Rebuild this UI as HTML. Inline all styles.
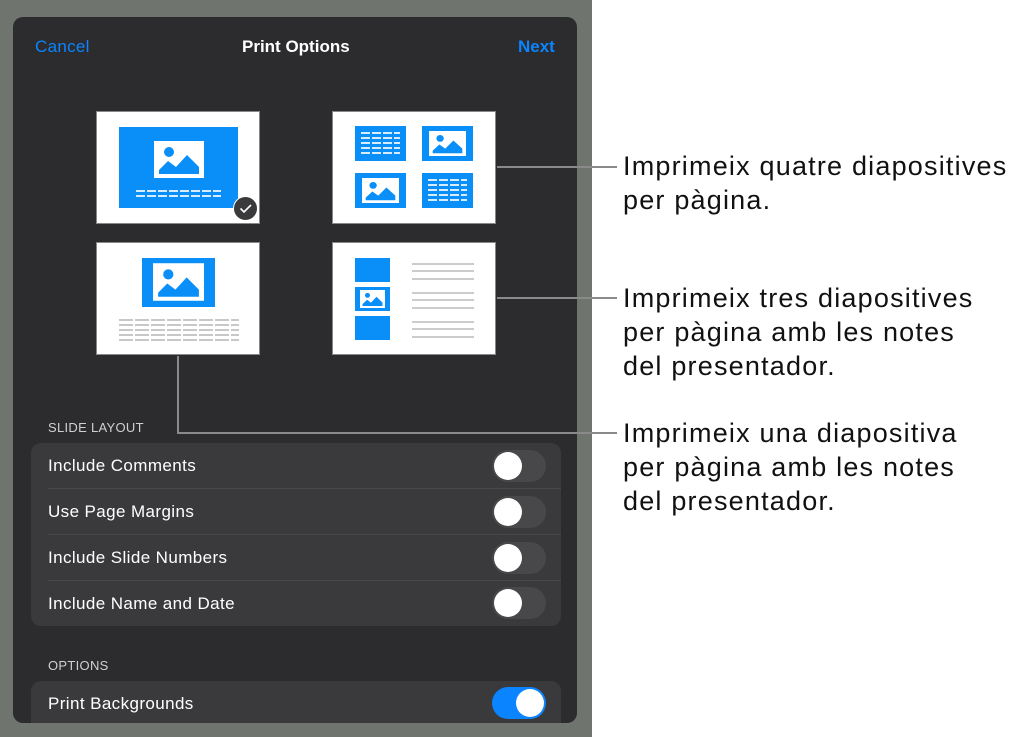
<!DOCTYPE html>
<html><head><meta charset="utf-8"><style>
*{margin:0;padding:0;box-sizing:border-box}
body{width:1017px;height:737px;background:#fff;position:relative;overflow:hidden;font-family:"Liberation Sans",sans-serif}
.a{position:absolute}
.gray{left:0;top:0;width:592px;height:737px;background:#6f746e}
.panel{left:13px;top:17px;width:564px;height:706px;background:#2c2c2e;border-radius:10px;overflow:hidden}
.card{position:absolute;background:#fff;width:164px;height:113px;border:1px solid #888}
.blue{position:absolute;background:#0a8ff8}
.wl{position:absolute;height:2px;background:repeating-linear-gradient(90deg,#d8ecff 0 9px,transparent 9px 11px)}
.gl{position:absolute;height:2px;background:#ccc}
.ln{position:absolute;background:#8a8a8a}
.grp{position:absolute;left:31px;width:530px;background:#3a3a3c;border-radius:10px}
.row{position:absolute;left:17px;color:#fff;font-size:17px;letter-spacing:0.4px}
.sep{position:absolute;left:17px;right:0;height:1px;background:#48484a}
.tg{position:absolute;right:15px;width:54px;height:32px;border-radius:16px;background:#48484a}
.tg::after{content:"";position:absolute;left:2px;top:2px;width:28px;height:28px;border-radius:50%;background:#fff}
.tg.on{background:#0a84ff}.tg.on::after{left:24px}
.hd{position:absolute;left:48px;color:#d0d0d0;font-size:13px;letter-spacing:0.3px}
.t{position:absolute;left:623px;font-size:27px;letter-spacing:1.2px;line-height:34px;color:#111}
</style></head><body>
<div class="a gray"></div>
<div class="a panel"></div>
<div class="a" style="left:35px;top:37px;color:#0a84ff;font-size:17px;letter-spacing:0.3px">Cancel</div>
<div class="a" style="left:242px;top:37px;color:#fff;font-size:17px;font-weight:bold">Print Options</div>
<div class="a" style="left:518px;top:37px;color:#0a84ff;font-size:17px;font-weight:bold">Next</div>

<svg width="0" height="0" style="position:absolute"><defs>
<symbol id="img" viewBox="0 0 50 37"><rect width="50" height="37" fill="#fff"/><circle cx="15" cy="11" r="5" fill="#0a8ff8"/><polygon points="5,33 5,29 14,20 22,26 33,14 45,26 45,33" fill="#0a8ff8"/></symbol>
</defs></svg>

<div class="card" style="left:96px;top:111px">
 <div class="blue" style="left:22px;top:15px;width:119px;height:81px"></div>
 <svg class="a" style="left:57px;top:29px" width="50" height="37"><use href="#img"/></svg>
 <div class="wl" style="left:39px;top:78px;width:85px"></div>
 <div class="wl" style="left:39px;top:83px;width:85px"></div>
</div>
<div class="a" style="left:233px;top:196px;width:25px;height:25px;border-radius:50%;background:#3a3a3c;border:1.5px solid #fff"></div>
<svg class="a" style="left:233px;top:196px" width="25" height="25"><path d="M7.5 12.5l3.5 3.5 7-7" stroke="#fff" stroke-width="1.6" fill="none"/></svg>

<div class="card" style="left:332px;top:111px">
 <div class="blue" style="left:22px;top:14px;width:51px;height:35px"></div>
 <div class="wl" style="left:28px;top:20px;width:39px"></div><div class="wl" style="left:28px;top:25px;width:39px"></div><div class="wl" style="left:28px;top:30px;width:39px"></div><div class="wl" style="left:28px;top:35px;width:39px"></div><div class="wl" style="left:28px;top:40px;width:39px"></div>
 <div class="blue" style="left:89px;top:14px;width:51px;height:35px"></div>
 <svg class="a" style="left:96px;top:19px" width="37" height="25" viewBox="0 0 50 37" preserveAspectRatio="none"><use href="#img"/></svg>
 <div class="blue" style="left:22px;top:61px;width:51px;height:35px"></div>
 <svg class="a" style="left:29px;top:66px" width="37" height="25" viewBox="0 0 50 37" preserveAspectRatio="none"><use href="#img"/></svg>
 <div class="blue" style="left:89px;top:61px;width:51px;height:35px"></div>
 <div class="wl" style="left:95px;top:67px;width:39px"></div><div class="wl" style="left:95px;top:72px;width:39px"></div><div class="wl" style="left:95px;top:77px;width:39px"></div><div class="wl" style="left:95px;top:82px;width:39px"></div><div class="wl" style="left:95px;top:87px;width:39px"></div>
</div>

<div class="card" style="left:96px;top:242px">
 <div class="blue" style="left:45px;top:15px;width:73px;height:49px"></div>
 <svg class="a" style="left:56px;top:20px" width="51" height="38" viewBox="0 0 50 37"><use href="#img"/></svg>
 <div class="gl" style="left:22px;top:76px;width:120px;background:repeating-linear-gradient(90deg,#c8c8c8 0 14px,transparent 14px 16px)"></div>
 <div class="gl" style="left:22px;top:81px;width:120px;background:repeating-linear-gradient(90deg,#c8c8c8 0 14px,transparent 14px 16px)"></div>
 <div class="gl" style="left:22px;top:86px;width:120px;background:repeating-linear-gradient(90deg,#c8c8c8 0 14px,transparent 14px 16px)"></div>
 <div class="gl" style="left:22px;top:91px;width:120px;background:repeating-linear-gradient(90deg,#c8c8c8 0 14px,transparent 14px 16px)"></div>
 <div class="gl" style="left:22px;top:96px;width:120px;background:repeating-linear-gradient(90deg,#c8c8c8 0 14px,transparent 14px 16px)"></div>
</div>

<div class="card" style="left:332px;top:242px">
 <div class="blue" style="left:22px;top:15px;width:35px;height:24px"></div>
 <div class="blue" style="left:22px;top:44px;width:35px;height:24px"></div>
 <svg class="a" style="left:27px;top:47px" width="25" height="18" viewBox="0 0 50 37" preserveAspectRatio="none"><use href="#img"/></svg>
 <div class="blue" style="left:22px;top:73px;width:35px;height:24px"></div>
 <div class="gl" style="left:79px;top:20px;width:62px"></div><div class="gl" style="left:79px;top:27px;width:62px"></div><div class="gl" style="left:79px;top:35px;width:62px"></div>
 <div class="gl" style="left:79px;top:49px;width:62px"></div><div class="gl" style="left:79px;top:56px;width:62px"></div><div class="gl" style="left:79px;top:64px;width:62px"></div>
 <div class="gl" style="left:79px;top:78px;width:62px"></div><div class="gl" style="left:79px;top:85px;width:62px"></div><div class="gl" style="left:79px;top:93px;width:62px"></div>
</div>

<div class="ln" style="left:497px;top:166px;width:120px;height:2px"></div>
<div class="ln" style="left:497px;top:297px;width:120px;height:2px"></div>
<div class="ln" style="left:177px;top:356px;width:2px;height:78px"></div>
<div class="ln" style="left:177px;top:432px;width:440px;height:2px"></div>

<div class="hd" style="top:420px">SLIDE LAYOUT</div>
<div class="grp" style="top:443px;height:183px">
 <div class="row" style="top:13px">Include Comments</div><div class="tg" style="top:7px"></div><div class="sep" style="top:45px"></div>
 <div class="row" style="top:59px">Use Page Margins</div><div class="tg" style="top:53px"></div><div class="sep" style="top:91px"></div>
 <div class="row" style="top:105px">Include Slide Numbers</div><div class="tg" style="top:99px"></div><div class="sep" style="top:137px"></div>
 <div class="row" style="top:151px">Include Name and Date</div><div class="tg" style="top:144px"></div>
</div>
<div class="hd" style="top:658px">OPTIONS</div>
<div class="grp" style="top:681px;height:42px;border-radius:10px 10px 0 0">
 <div class="row" style="top:13px">Print Backgrounds</div><div class="tg on" style="top:6px"></div>
</div>

<div class="t" style="top:149px">Imprimeix quatre diapositives<br>per pàgina.</div>
<div class="t" style="top:281px">Imprimeix tres diapositives<br>per pàgina amb les notes<br>del presentador.</div>
<div class="t" style="top:416px">Imprimeix una diapositiva<br>per pàgina amb les notes<br>del presentador.</div>
</body></html>
